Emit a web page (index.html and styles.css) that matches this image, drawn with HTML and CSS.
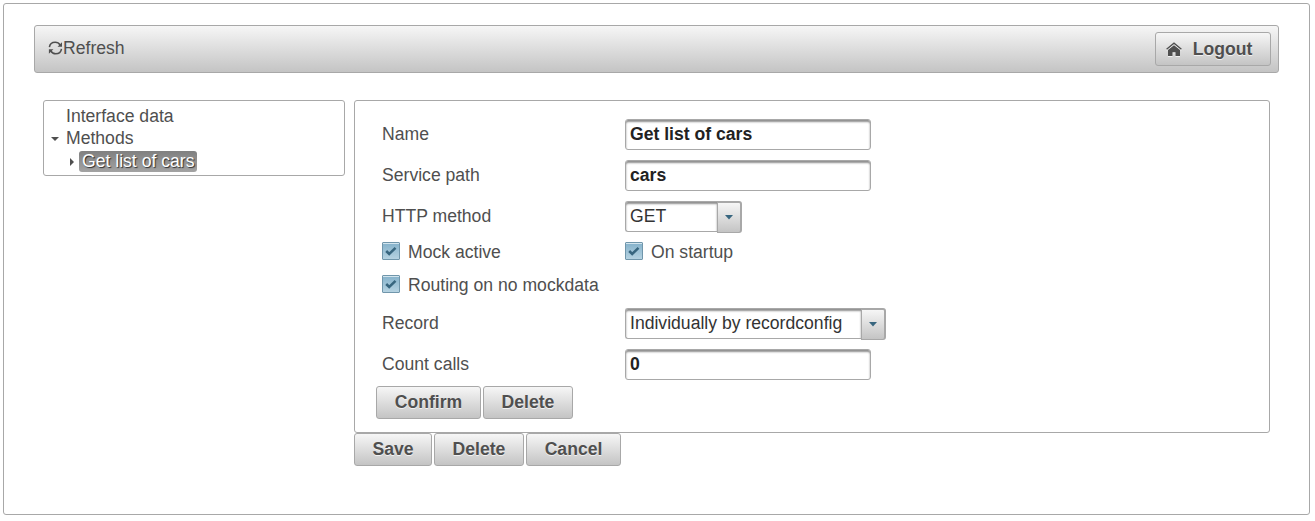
FILE: index.html
```html
<!DOCTYPE html>
<html lang="en">
<head>
<meta charset="utf-8">
<title>Get list of cars</title>
<link rel="stylesheet" href="styles.css">
</head>
<body>
<main class="page">
  <header class="toolbar">
    <a class="refresh"><svg class="refresh-icon" width="15" height="14" viewBox="0 0 15 14"><path d="M1.4 6.2C1.8 3.2 4.3 1.3 7.2 1.3c2.2 0 3.9 1 4.9 2.7M13.5 7.8c-.4 3-2.9 4.9-5.8 4.9-2.2 0-3.9-1-4.9-2.7" fill="none" stroke="#4f4f4f" stroke-width="1.5"/><path d="M14 1.2v4.6H9.5zM.9 12.8V8.2h4.5z" fill="#4f4f4f"/></svg>Refresh</a>
    <button class="button logout"><svg class="home-icon" width="16" height="15" viewBox="0 0 16 15"><path d="M.6 7.2 8 1.2l7.4 6" fill="none" stroke="#4f4f4f" stroke-width="1.4"/><path d="M8 3.2 14 8v6H9.5v-3.7h-3V14H2V8z" fill="#4f4f4f"/></svg>Logout</button>
  </header>
  <div class="content">
    <nav class="tree">
      <div class="node"><span class="toggler"></span><span>Interface data</span></div>
      <div class="node"><span class="toggler"><svg width="8" height="4"><path d="M0 0h8L4 4z" fill="#4f4f4f"/></svg></span><span>Methods</span></div>
      <div class="node child"><span class="toggler"><svg width="4" height="8"><path d="M0 0v8l4-4z" fill="#4f4f4f"/></svg></span><span class="selected">Get list of cars</span></div>
    </nav>
    <div class="editor">
      <section class="panel">
        <div class="form">
          <label>Name</label><input class="field" value="Get list of cars">
          <label>Service path</label><input class="field" value="cars">
          <label>HTTP method</label>
          <div class="menu method"><span class="menu-label">GET</span><span class="trigger"><svg width="8" height="5"><path d="M0 0h8L4 4.5z" fill="#38667f"/></svg></span></div>
          <div class="check"><span class="box"><svg width="12" height="10" viewBox="0 0 12 10"><path d="m1.2 5 3 3L10.5 1.8" fill="none" stroke="#38667f" stroke-width="2.5"/></svg></span>Mock active</div>
          <div class="check"><span class="box"><svg width="12" height="10" viewBox="0 0 12 10"><path d="m1.2 5 3 3L10.5 1.8" fill="none" stroke="#38667f" stroke-width="2.5"/></svg></span>On startup</div>
          <div class="check wide"><span class="box"><svg width="12" height="10" viewBox="0 0 12 10"><path d="m1.2 5 3 3L10.5 1.8" fill="none" stroke="#38667f" stroke-width="2.5"/></svg></span>Routing on no mockdata</div>
          <label>Record</label>
          <div class="menu record"><span class="menu-label">Individually by recordconfig</span><span class="trigger"><svg width="8" height="5"><path d="M0 0h8L4 4.5z" fill="#38667f"/></svg></span></div>
          <label>Count calls</label><input class="field" value="0">
        </div>
        <div class="actions">
          <button class="button confirm">Confirm</button>
          <button class="button delete">Delete</button>
        </div>
      </section>
      <div class="actions">
        <button class="button save">Save</button>
        <button class="button delete">Delete</button>
        <button class="button cancel">Cancel</button>
      </div>
    </div>
  </div>
</main>
</body>
</html>
```
FILE: styles.css
```css
* { box-sizing: border-box; }

body {
  margin: 0;
  padding: 3px;
  background: #fff;
  color: #4f4f4f;
  font: 17.6px/22px "Liberation Sans", Arial, sans-serif;
}

.page {
  width: 1307px;
  height: 512px;
  padding: 21px 30px;
  border: 1px solid #a8a8a8;
  border-radius: 3px;
}

.toolbar {
  display: flex;
  justify-content: space-between;
  align-items: center;
  height: 48px;
  padding: 0 7px 0 13px;
  border: 1px solid #a8a8a8;
  border-radius: 3px;
  background: linear-gradient(#f6f6f6, #c4c4c4);
}

.refresh { display: flex; align-items: center; height: 22px; margin-bottom: 3px; }
.refresh-icon { flex: none; }

.button {
  display: flex;
  justify-content: center;
  height: 33px;
  padding: 4px 0 0;
  border: 1px solid #a8a8a8;
  border-radius: 3px;
  background: linear-gradient(#f6f6f6, #c4c4c4);
  color: #4f4f4f;
  font: bold 17.6px/22px "Liberation Sans", Arial, sans-serif;
  text-shadow: 0 1px 0 rgba(255, 255, 255, .7);
}

.logout { width: 116px; height: 34px; padding: 5px 8px 0 0; gap: 11px; }
.home-icon { margin-top: 4px; filter: drop-shadow(0 1px 0 rgba(255, 255, 255, .7)); }
.confirm { width: 105px; }
.delete { width: 90px; }
.save { width: 78px; }
.cancel { width: 95px; }
.actions { display: flex; gap: 2px; }

.content { display: flex; gap: 9px; padding: 27px 8px 0 9px; }

.tree {
  flex: none;
  align-self: flex-start;
  width: 302px;
  height: 76px;
  padding: 4px 0 0 7px;
  border: 1px solid #a8a8a8;
  border-radius: 3px;
}

.node { display: flex; align-items: center; height: 22px; }
.child { height: 24px; padding-left: 16px; }
.toggler { display: flex; align-items: center; width: 15px; height: 22px; padding-top: 2px; }
.child .toggler { justify-content: center; width: 10px; margin-right: 2px; }

.selected {
  height: 21px;
  padding: 0 3px;
  border-radius: 3px;
  background: linear-gradient(#808080, #a3a3a3);
  color: #fff;
  line-height: 20px;
  text-shadow: 1px 1px 1px rgba(0, 0, 0, .7);
}

.editor { flex: none; width: 916px; }

.panel {
  height: 333px;
  padding: 13px 21px;
  border: 1px solid #a8a8a8;
  border-radius: 3px;
}

.form {
  display: grid;
  grid-template-columns: 243px 300px;
  grid-template-rows: 41px 41px 41px 29px 37px 41px 41px;
  align-items: center;
  margin: 0 0 1px 6px;
}

.form label { padding-bottom: 1px; }

.field,
.menu-label {
  height: 31px;
  padding: 3px 4px;
  border: 1px solid #a8a8a8;
  border-radius: 3px;
  background: #fff;
  box-shadow: inset 0 2px 2px #8f8f8f;
  color: #222;
}

.field { width: 246px; font: bold 17.6px/22px "Liberation Sans", Arial, sans-serif; }

.menu {
  display: flex;
  height: 31px;
  border-radius: 3px;
}

.menu-label { flex: 1; border-right: 0; border-radius: 3px 0 0 3px; color: #333; white-space: nowrap; }

.trigger {
  display: flex;
  justify-content: center;
  align-items: center;
  width: 25px;
  height: 32px;
  border: 1px solid #a8a8a8;
  border-top-width: 2px;
  border-right-width: 2px;
  border-radius: 0 3px 3px 0;
  background: linear-gradient(#f6f6f6, #c4c4c4);
}

.method { width: 117px; }
.record { width: 261px; }

.check { display: flex; align-items: center; gap: 8px; }
.wide { grid-column: span 2; }

.box {
  display: flex;
  justify-content: center;
  align-items: center;
  width: 18px;
  height: 18px;
  margin-bottom: 2px;
  border: 1px solid #7096ab;
  border-radius: 1px;
  background: linear-gradient(#85b2cb, #b5d2e1);
  box-shadow: inset 0 1px 0 #d3e5ee;
}
```
